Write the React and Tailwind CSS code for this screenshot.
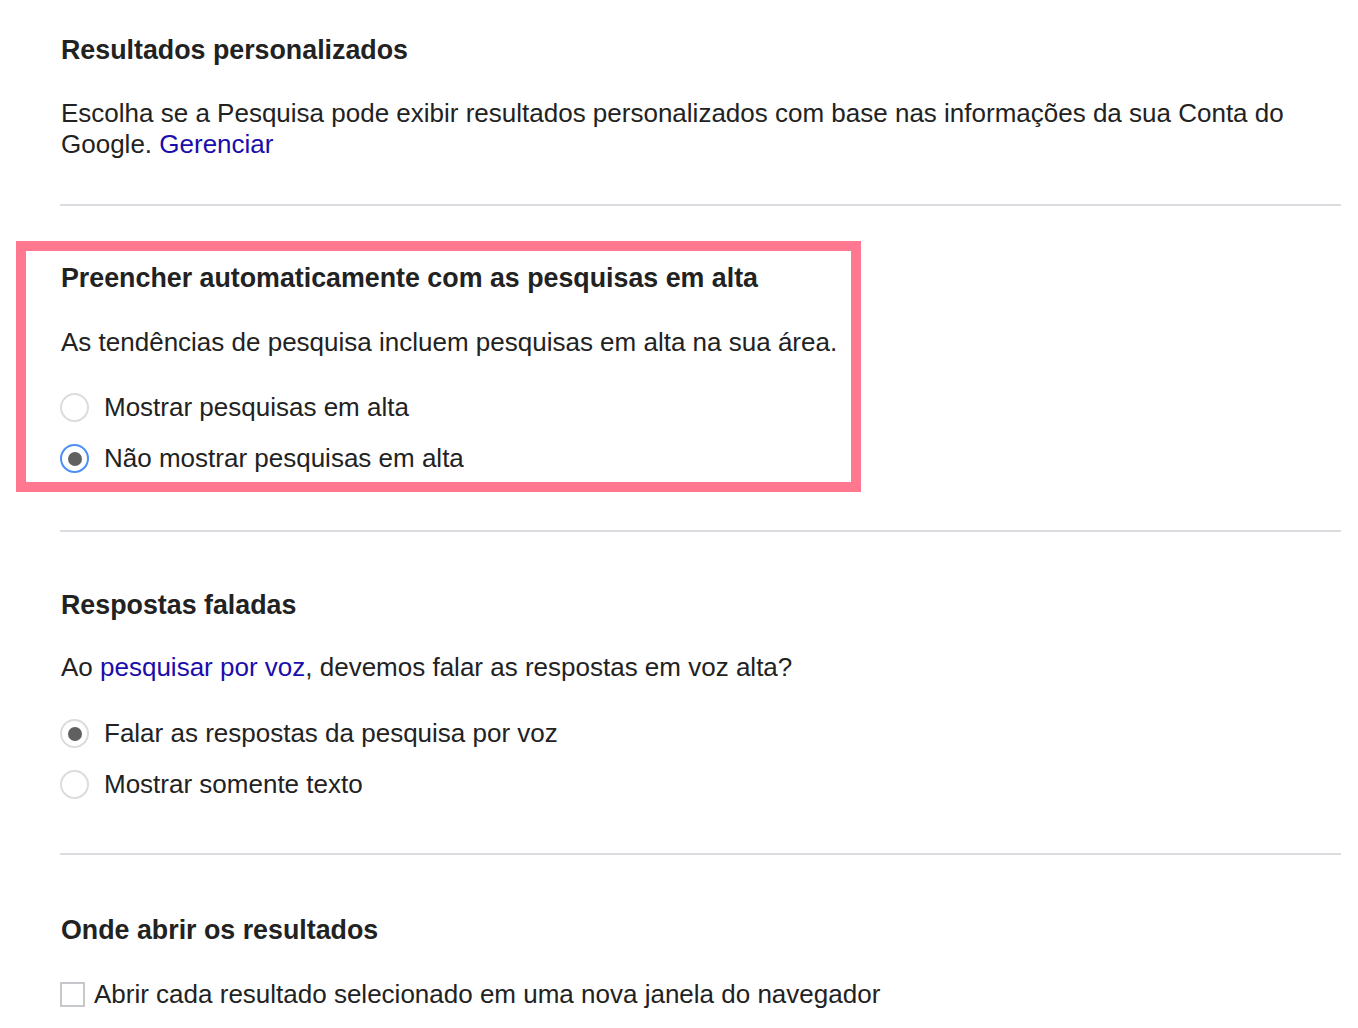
const FONT = { fontFamily: '"Liberation Sans", Arial, sans-serif' }

function Radio({ checked, focused }) {
  return (
    <span
      className={`flex h-[29px] w-[29px] shrink-0 items-center justify-center rounded-full border-2 ${
        focused ? 'border-[#4d8ef7]' : 'border-[#dcdcdf]'
      }`}
    >
      {checked && <span className="h-[14px] w-[14px] rounded-full bg-[#606060]" />}
    </span>
  )
}

function Option({ label, checked, focused }) {
  return (
    <div className="flex h-[31px] items-center gap-[15px]">
      <Radio checked={checked} focused={focused} />
      <span>{label}</span>
    </div>
  )
}

function Heading({ children }) {
  return <h2 className="h-[31px] text-[26.8px] font-bold leading-[31px] text-[#222]">{children}</h2>
}

export default function App() {
  return (
    <div className="min-h-[1028px] bg-white text-[#222] text-[26px] leading-[31px]" style={FONT}>
      <div className="pl-[60px] pr-[17px] pt-[35px]">
        {/* Resultados personalizados */}
        <section className="pl-px">
          <Heading>Resultados personalizados</Heading>
          <p className="mt-[32px]">
            Escolha se a Pesquisa pode exibir resultados personalizados com base nas informações da sua Conta do
            Google. <a className="text-[#1a0dab]">Gerenciar</a>
          </p>
        </section>

        <div className="mt-[44px] h-[2px] bg-[#dcdce0]" />

        {/* Preencher automaticamente */}
        <section className="-ml-[44px] mt-[35px] w-[845px] border-[10px] border-[#ff7890] pb-[8px] pl-[34px] pt-[12px]">
          <div className="pl-px">
            <Heading>Preencher automaticamente com as pesquisas em alta</Heading>
            <p className="mt-[33px]">As tendências de pesquisa incluem pesquisas em alta na sua área.</p>
          </div>
          <div className="mt-[34px] flex flex-col gap-[20px]">
            <Option label="Mostrar pesquisas em alta" />
            <Option label="Não mostrar pesquisas em alta" checked focused />
          </div>
        </section>

        <div className="mt-[38px] h-[2px] bg-[#dcdce0]" />

        {/* Respostas faladas */}
        <section className="mt-[58px]">
          <div className="pl-px">
            <Heading>Respostas faladas</Heading>
            <p className="mt-[31px]">
              Ao <a className="text-[#1a0dab]">pesquisar por voz</a>, devemos falar as respostas em voz alta?
            </p>
          </div>
          <div className="mt-[35px] flex flex-col gap-[20px]">
            <Option label="Falar as respostas da pesquisa por voz" checked />
            <Option label="Mostrar somente texto" />
          </div>
        </section>

        <div className="mt-[53px] h-[2px] bg-[#dcdce0]" />

        {/* Onde abrir os resultados */}
        <section className="mt-[60px]">
          <div className="pl-px">
            <Heading>Onde abrir os resultados</Heading>
          </div>
          <label className="mt-[33px] flex h-[31px] items-center gap-[9px]">
            <span className="h-[25px] w-[25px] shrink-0 border-2 border-[#c8c8cc] bg-white" />
            <span>Abrir cada resultado selecionado em uma nova janela do navegador</span>
          </label>
        </section>
      </div>
    </div>
  )
}
